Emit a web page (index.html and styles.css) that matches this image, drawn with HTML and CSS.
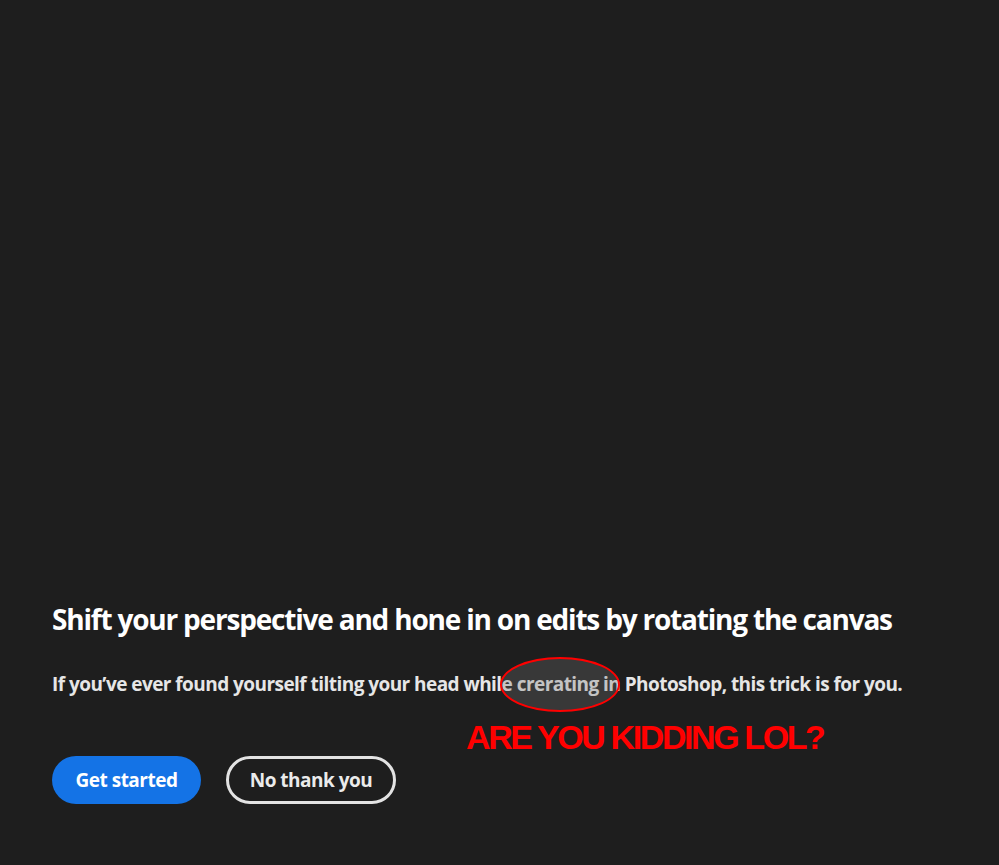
FILE: index.html
```html
<!DOCTYPE html>
<html lang="en">
<head>
<meta charset="utf-8">
<title>Rotate the canvas</title>
<link rel="stylesheet" href="styles.css">
</head>
<body>
<main class="page">
  <section class="tip">
    <h1 class="tip-title">Shift your perspective and hone in on edits by rotating the canvas</h1>
    <p class="tip-text">If you’ve ever found yourself tilting your head while crerating in Photoshop, this trick is for you.</p>
    <div class="actions">
      <button class="btn btn-primary">Get started</button>
      <button class="btn btn-secondary">No thank you</button>
    </div>
  </section>
  <div class="mark-ellipse"></div>
  <div class="mark-text">ARE YOU KIDDING LOL?</div>
</main>
</body>
</html>
```
FILE: styles.css
```css
html, body {
  margin: 0;
  padding: 0;
  background: #1e1e1e;
}
.page {
  position: relative;
  height: 865px;
  display: flex;
  flex-direction: column;
  justify-content: flex-end;
  padding: 0 0 61px 52px;
  box-sizing: border-box;
  font-family: "Open Sans", "Noto Sans", sans-serif;
}
.tip-title {
  margin: 0;
  color: #ffffff;
  font-size: 28px;
  font-weight: 700;
  line-height: 36px;
  letter-spacing: -1.2px;
}
.tip-text {
  margin: 34px 0 0;
  color: #e6e6e6;
  font-size: 19px;
  font-weight: 700;
  line-height: 26px;
  letter-spacing: -0.55px;
}
.actions {
  display: flex;
  gap: 25px;
  margin-top: 59px;
}
.btn {
  height: 48px;
  border-radius: 24px;
  font-family: inherit;
  font-size: 19px;
  font-weight: 700;
  padding: 0;
  white-space: nowrap;
  box-sizing: border-box;
  cursor: pointer;
  letter-spacing: -0.5px;
}
.btn-primary {
  width: 149px;
  background: #1473e6;
  color: #ffffff;
  border: none;
}
.btn-secondary {
  width: 170px;
  background: transparent;
  color: #ebebeb;
  border: 3px solid #e3e3e3;
}
.mark-ellipse {
  position: absolute;
  left: 500px;
  top: 657px;
  width: 120px;
  height: 55px;
  box-sizing: border-box;
  border: 2px solid #ff0000;
  border-radius: 50%;
  background: rgba(120, 120, 120, 0.3);
}
.mark-text {
  position: absolute;
  left: 466px;
  top: 717px;
  color: #ff0000;
  font-family: "Liberation Sans", Arial, sans-serif;
  font-weight: 700;
  font-size: 34px;
  line-height: 40px;
  letter-spacing: -2.4px;
}
```
